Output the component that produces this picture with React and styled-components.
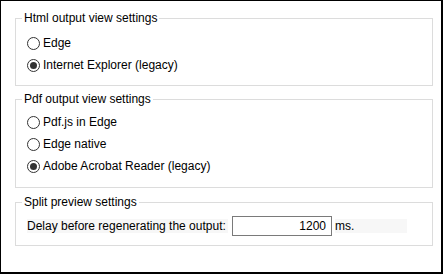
import React from "react";
import styled, { createGlobalStyle } from "styled-components";

const GlobalStyle = createGlobalStyle`
  html, body {
    margin: 0;
    padding: 0;
    background: #ffffff;
  }
  body {
    font-family: "Liberation Sans", Arial, sans-serif;
    font-size: 12px;
    color: #000000;
  }
`;

const Frame = styled.div`
  box-sizing: border-box;
  width: 443px;
  height: 274px;
  border-style: solid;
  border-color: #000000;
  border-width: 1px 2px 2px 1px;
  padding: 9px 8px 0 14px;
  display: flex;
  flex-direction: column;
`;

const Group = styled.fieldset`
  margin: ${({ $top }) => $top || 0}px 0 0 0;
  padding: 0 10px ${({ $bottom }) => $bottom || 9}px 11px;
  border: 1px solid #dcdcdc;
  min-width: 0;
`;

const Legend = styled.legend`
  margin-left: -5px;
  padding: 0 2px;
  line-height: 16px;
  font-size: 12px;
`;

const Options = styled.div`
  display: flex;
  flex-direction: column;
  padding-top: ${({ $top }) => $top || 6}px;
`;

const Option = styled.label`
  display: flex;
  align-items: center;
  height: 22px;
  gap: 3px;
  cursor: default;
`;

const Radio = styled.span`
  box-sizing: border-box;
  width: 13px;
  height: 13px;
  border-radius: 50%;
  border: 1px solid #333333;
  background: #ffffff;
  display: flex;
  align-items: center;
  justify-content: center;

  &::after {
    content: "";
    width: 7px;
    height: 7px;
    border-radius: 50%;
    background: ${({ $checked }) => ($checked ? "#333333" : "transparent")};
  }
`;

const DelayRow = styled.div`
  display: flex;
  align-items: center;
  height: 20px;
  padding-top: 6px;
`;

const Caption = styled.span`
  width: ${({ $width }) => $width}px;
  height: 14px;
  line-height: 14px;
  background: #f7f7f7;
  white-space: nowrap;
  margin-left: ${({ $gap }) => $gap || 0}px;
`;

const NumberBox = styled.input`
  box-sizing: border-box;
  width: 100px;
  height: 20px;
  margin: 0 0 0 4px;
  padding: 0 5px;
  border: 1px solid #7a7a7a;
  text-align: right;
  font-family: inherit;
  font-size: 12px;
  color: #000000;
  background: #ffffff;
  outline: none;
`;

const RadioGroup = ({ title, options, selected, top, bottom, padTop }) => (
  <Group $top={top} $bottom={bottom}>
    <Legend>{title}</Legend>
    <Options $top={padTop}>
      {options.map((o) => (
        <Option key={o}>
          <Radio $checked={o === selected} />
          {o}
        </Option>
      ))}
    </Options>
  </Group>
);

const App = () => {
  return (
    <>
      <GlobalStyle />
      <Frame>
        <RadioGroup
          title="Html output view settings"
          options={["Edge", "Internet Explorer (legacy)"]}
          selected="Internet Explorer (legacy)"
        />
        <RadioGroup
          title="Pdf output view settings"
          options={["Pdf.js in Edge", "Edge native", "Adobe Acrobat Reader (legacy)"]}
          selected="Adobe Acrobat Reader (legacy)"
          top={5}
          padTop={4}
          bottom={10}
        />
        <Group $top={6} $bottom={9}>
          <Legend>Split preview settings</Legend>
          <DelayRow>
            <Caption $width={201}>Delay before regenerating the output:</Caption>
            <NumberBox type="text" defaultValue="1200" />
            <Caption $width={72} $gap={3}>ms.</Caption>
          </DelayRow>
        </Group>
      </Frame>
    </>
  );
};

export default App;
